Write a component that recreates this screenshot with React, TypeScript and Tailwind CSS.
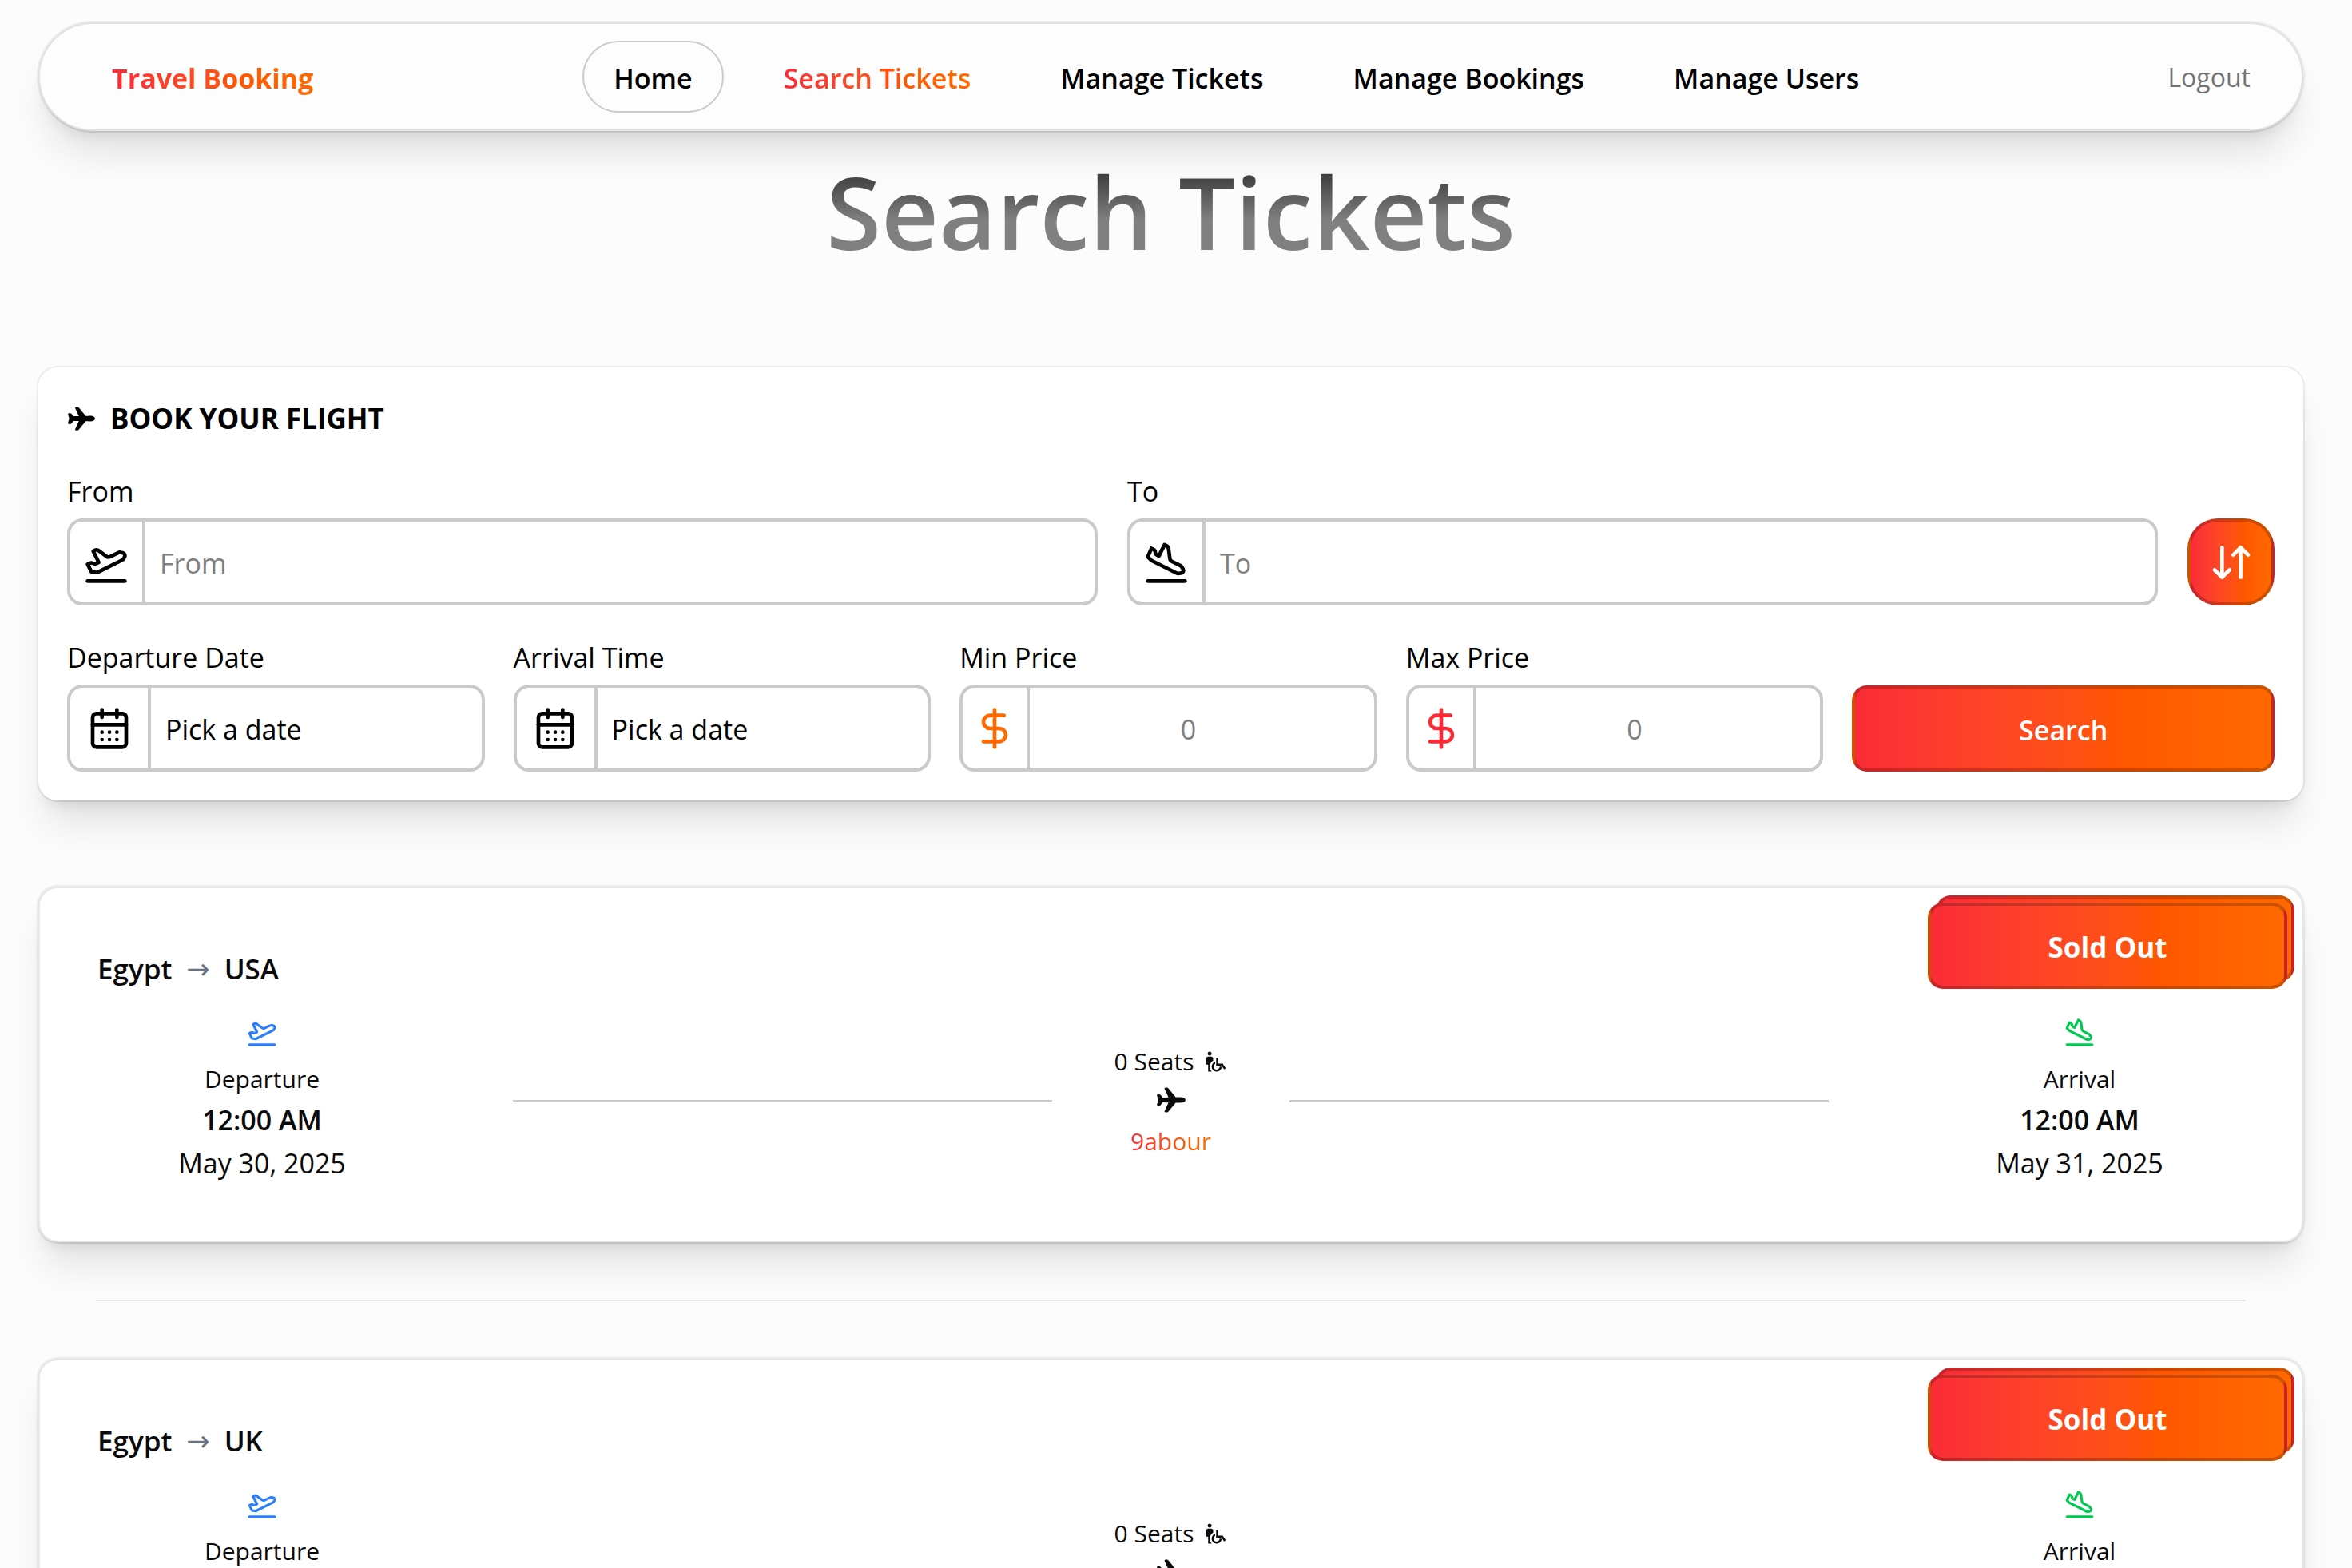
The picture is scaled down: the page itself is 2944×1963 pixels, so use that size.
import React from "react";
import { PlaneTakeoff, PlaneLanding, CalendarDays, DollarSign, ArrowDownUp } from "lucide-react";
import { IoAirplane } from "react-icons/io5";
import { MdWheelchairPickup } from "react-icons/md";

const brandText = "bg-linear-to-r from-red-500 to-orange-500 bg-clip-text text-transparent";
const cardShadow =
  "shadow-[0_37px_47px_-9px_rgba(0,0,0,0.1),0_15px_19px_-11px_rgba(0,0,0,0.1),0_2px_3px_-2px_rgba(0,0,0,0.12),0_0_0_2px_rgba(25,28,33,0.07)]";
const brandButton =
  "border-4 border-black/20 bg-linear-to-r from-red-500 to-orange-500 text-white";

const navLinks = [
  { label: "Home", style: "border-2 border-[#cccccc]" },
  { label: "Search Tickets", style: "" },
  { label: "Manage Tickets", style: "" },
  { label: "Manage Bookings", style: "" },
  { label: "Manage Users", style: "" },
];

function Navbar() {
  return (
    <header
      className={`flex items-center justify-between rounded-full border-2 border-[#e2e2e2] bg-[#fdfdfd] py-[21px] pr-[64px] pl-[90px] ${cardShadow}`}
    >
      <a href="#" className={`pt-[3px] text-[34px] leading-[52px] font-bold ${brandText}`}>
        Travel Booking
      </a>
      <nav className="mr-3 flex items-center gap-[38px]">
        {navLinks.map((link) => (
          <a
            key={link.label}
            href="#"
            className={`flex h-[90px] items-center rounded-full px-[37px] pt-[3px] text-[34px] leading-[52px] font-semibold text-black ${link.style}`}
          >
            {link.label === "Search Tickets" ? <span className={brandText}>{link.label}</span> : link.label}
          </a>
        ))}
      </nav>
      <button type="button" className="pt-[2px] text-[32px] leading-[48px] font-medium text-[#737373]">
        Logout
      </button>
    </header>
  );
}

const fieldBox =
  "flex h-[109px] items-stretch overflow-hidden rounded-[19px] border-4 border-[#cacaca] bg-white";
const iconBox = "flex items-center justify-center border-r-4 border-[#cacaca]";
const inputText =
  "min-w-0 flex-1 bg-transparent pt-[3px] text-[34px] text-black outline-none placeholder:text-[#808080]";

function PlaceField({ id, label, icon }: { id: string; label: string; icon: React.ReactNode }) {
  return (
    <div className="flex min-w-0 flex-1 flex-col">
      <label htmlFor={id} className="text-[34px] leading-[52px]">
        {label}
      </label>
      <div className={`mt-2 ${fieldBox}`}>
        <span className={`w-[94px] ${iconBox}`}>{icon}</span>
        <input id={id} type="text" placeholder={label} className={`pl-[18px] ${inputText}`} />
      </div>
    </div>
  );
}

function DateField({ id, label }: { id: string; label: string }) {
  return (
    <div className="flex flex-col pr-[6px]">
      <label htmlFor={id} className="text-[34px] leading-[52px]">
        {label}
      </label>
      <button id={id} type="button" className={`mt-2 text-left ${fieldBox}`}>
        <span className={`w-[101px] ${iconBox}`}>
          <CalendarDays size={56} />
        </span>
        <span className="flex items-center pt-[3px] pl-[18px] text-[34px]">Pick a date</span>
      </button>
    </div>
  );
}

function PriceField({ id, label, tone }: { id: string; label: string; tone: string }) {
  return (
    <div className="flex flex-col pr-[6px]">
      <label htmlFor={id} className="text-[34px] leading-[52px]">
        {label}
      </label>
      <div className={`mt-2 ${fieldBox}`}>
        <span className={`w-[84px] ${iconBox} ${tone}`}>
          <DollarSign size={56} />
        </span>
        <input id={id} type="text" inputMode="numeric" placeholder="0" className={`pr-[34px] text-center ${inputText}`} />
      </div>
    </div>
  );
}

function SearchCard() {
  return (
    <form className={`mt-[125px] rounded-[24px] bg-white px-[36px] pt-[38px] pb-[36px] ${cardShadow}`}>
      <h2 className="flex items-center gap-[18px] text-[35px] leading-[52px] font-bold text-black">
        <IoAirplane size={36} />
        BOOK YOUR FLIGHT
      </h2>
      <div className="mt-[39px] flex items-end gap-[37px]">
        <PlaceField id="from" label="From" icon={<PlaneTakeoff size={56} />} />
        <PlaceField id="to" label="To" icon={<PlaneLanding size={56} />} />
        <button
          type="button"
          aria-label="Swap"
          className={`flex size-[109px] items-center justify-center rounded-[38px] ${brandButton}`}
        >
          <ArrowDownUp size={56} />
        </button>
      </div>
      <div className="mt-[39px] grid grid-cols-5 items-end gap-[30px]">
        <DateField id="departure" label="Departure Date" />
        <DateField id="arrival" label="Arrival Time" />
        <PriceField id="min" label="Min Price" tone="text-orange-500" />
        <PriceField id="max" label="Max Price" tone="text-red-500" />
        <button type="submit" className={`h-[108px] rounded-[19px] pt-1 text-[34px] font-semibold ${brandButton}`}>
          Search
        </button>
      </div>
    </form>
  );
}

function Stop({ icon, label, time, date }: { icon: React.ReactNode; label: string; time: string; date: string }) {
  return (
    <div className="flex flex-col items-center">
      {icon}
      <p className="mt-[15px] text-[30px] leading-[50px]">{label}</p>
      <p className="text-[34px] leading-[52px] font-semibold">{time}</p>
      <p className="text-[34px] leading-[56px]">{date}</p>
    </div>
  );
}

type Ticket = { from: string; to: string; departure: string; arrival: string };

function TicketCard({ ticket }: { ticket: Ticket }) {
  return (
    <article
      className={`relative rounded-[24px] border-2 border-gray-200 bg-white px-[72px] pt-[75px] pb-[69px] text-neutral-950 ${cardShadow}`}
    >
      <h3 className="flex items-center gap-[18px] text-[35px] leading-[52px] font-semibold">
        {ticket.from}
        <span className="font-['DejaVu_Sans',sans-serif] text-[35px] font-normal text-gray-500">→</span>
        {ticket.to}
      </h3>
      <div className="mt-[34px] grid grid-cols-[412px_1fr_412px] items-center">
        <Stop
          icon={<PlaneTakeoff size={38} className="text-blue-500" />}
          label="Departure"
          time="12:00 AM"
          date={ticket.departure}
        />
        <div className="flex items-center px-[108px]">
          <div className="h-[3px] flex-1 bg-[#cacaca]" />
          <div className="flex w-[297px] flex-col items-center">
            <p className="flex items-center gap-[12px] text-[30px] leading-[50px]">
              0 Seats <MdWheelchairPickup size={30} />
            </p>
            <IoAirplane size={38} className="mt-1" />
            <p className={`mt-2 text-[30px] leading-[50px] ${brandText}`}>9abour</p>
          </div>
          <div className="h-[3px] flex-1 bg-[#cacaca]" />
        </div>
        <Stop
          icon={<PlaneLanding size={38} className="text-green-500" />}
          label="Arrival"
          time="12:00 AM"
          date={ticket.arrival}
        />
      </div>
      <div className="absolute top-[9px] right-[9px] h-[117px] w-[459px]">
        <div className={`absolute top-0 right-0 h-[108px] w-[449px] rounded-[19px] ${brandButton}`} />
        <div
          className={`absolute bottom-0 left-0 flex h-[108px] w-[450px] items-center justify-center rounded-[19px] pt-1 text-[35px] font-bold ${brandButton}`}
        >
          Sold Out
        </div>
      </div>
    </article>
  );
}

const tickets: Ticket[] = [
  { from: "Egypt", to: "USA", departure: "May 30, 2025", arrival: "May 31, 2025" },
  { from: "Egypt", to: "UK", departure: "May 30, 2025", arrival: "May 31, 2025" },
];

export default function App() {
  return (
    <div className="min-h-screen bg-[#fcfcfc] pt-[28px] pr-[61px] pb-[72px] pl-[48px] font-['Open_Sans','Noto_Sans',sans-serif] text-black">
      <Navbar />
      <h1 className="bg-[linear-gradient(180deg,#000_0,#808080_112px)] bg-clip-text pt-[33px] pb-[3px] text-center text-[125px] leading-[135px] font-semibold text-transparent">
        Search Tickets
      </h1>
      <SearchCard />
      <main className="mt-[108px]">
        {tickets.map((ticket, i) => (
          <React.Fragment key={ticket.to}>
            {i > 0 && <hr className="mx-[72px] my-[72px] border-t-2 border-gray-200" />}
            <TicketCard ticket={ticket} />
          </React.Fragment>
        ))}
      </main>
    </div>
  );
}
